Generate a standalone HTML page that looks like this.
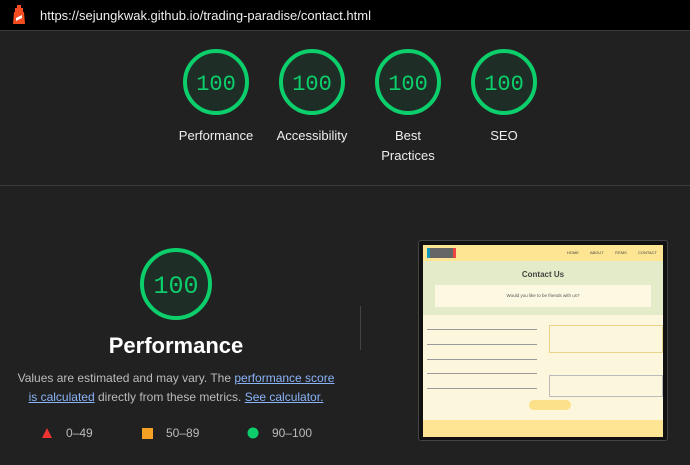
<!DOCTYPE html><html><head><style>
body{margin:0;width:690px;height:465px;background:#212121;font-family:"Liberation Sans",sans-serif;color:#fff;position:relative;overflow:hidden}
.top{position:absolute;left:0;top:0;width:690px;height:30px;background:#000;border-bottom:1px solid #3a3a3a}
.url{position:absolute;left:40px;top:8px;font-size:13px;color:#eee}
.lbl{position:absolute;width:110px;text-align:center;font-size:13px;line-height:20px;color:#eee}
.a{color:#8ab4f8;text-decoration:underline}
</style></head><body>
<div class="top"><svg style="position:absolute;left:12px;top:5px" width="14" height="20" viewBox="0 0 14 20"><rect x="5" y="0" width="4" height="3" fill="#f44b21"/><rect x="3" y="3" width="8" height="4" fill="#f44b21"/><path d="M2 7h10l1 12H1z" fill="#f44b21"/><path d="M4 13l6-3v3l-6 3z" fill="#fff"/></svg><div class="url">https://sejungkwak.github.io/trading-paradise/contact.html</div></div>
<svg style="position:absolute;left:0;top:0" width="690" height="465">
<g fill="#1e2d25" stroke="#0cce6b" stroke-width="4">
<circle cx="216" cy="82" r="31"/><circle cx="312" cy="82" r="31"/><circle cx="408" cy="82" r="31"/><circle cx="504" cy="82" r="31"/>
<circle cx="176" cy="284" r="34"/></g>
<g fill="#0cce6b" font-family="Liberation Mono,monospace" text-anchor="middle" font-size="22">
<text x="216" y="90">100</text><text x="312" y="90">100</text><text x="408" y="90">100</text><text x="504" y="90">100</text>
<text x="176" y="293" font-size="25">100</text></g>
<line x1="0" y1="185.5" x2="690" y2="185.5" stroke="#3a3a3a"/>
<line x1="360.5" y1="306" x2="360.5" y2="350" stroke="#444"/>
<polygon points="47,428 52,438 42,438" fill="#e33"/>
<rect x="142" y="428" width="11" height="11" fill="#f4a124"/>
<circle cx="253" cy="433" r="5.5" fill="#0cce6b"/>
</svg>
<div class="lbl" style="left:161px;top:126px">Performance</div>
<div class="lbl" style="left:257px;top:126px">Accessibility</div>
<div class="lbl" style="left:353px;top:126px">Best<br>Practices</div>
<div class="lbl" style="left:449px;top:126px">SEO</div>
<div style="position:absolute;left:0;width:352px;top:333px;text-align:center;font-size:22px;font-weight:bold">Performance</div>
<div style="position:absolute;left:0;width:352px;top:369px;text-align:center;font-size:12px;line-height:19px;color:#bbb">Values are estimated and may vary. The <span class="a">performance score<br>is calculated</span> directly from these metrics. <span class="a">See calculator.</span></div>
<div style="position:absolute;top:426px;left:66px;font-size:12px;color:#bbb">0–49</div>
<div style="position:absolute;top:426px;left:166px;font-size:12px;color:#bbb">50–89</div>
<div style="position:absolute;top:426px;left:272px;font-size:12px;color:#bbb">90–100</div>
<div style="position:absolute;left:418px;top:240px;width:248px;height:199px;background:#111;border:1px solid #444;border-radius:3px">
<div style="position:absolute;left:4px;top:4px;width:240px;height:192px;background:#fcf6dd;overflow:hidden">
<div style="height:16px;background:#fde593;position:relative"><div style="position:absolute;left:4px;top:3px;width:23px;height:10px;background:#666;border-left:3px solid #19b;border-right:3px solid #e44"></div>
<div style="position:absolute;right:6px;top:5px;font-size:4px;color:#444;word-spacing:10px">HOME ABOUT ITEMS CONTACT</div></div>
<div style="height:54px;background:#e4ebc8;position:relative;text-align:center"><div style="font-size:8px;font-weight:bold;color:#444;padding-top:9px">Contact Us</div>
<div style="position:absolute;left:12px;right:12px;top:24px;height:22px;background:#fdf8e2;font-size:4.5px;color:#555;line-height:22px">Would you like to be friends with us?</div></div>
<div style="position:absolute;left:106px;top:155px;width:42px;height:10px;background:#fde08a;border-radius:6px"></div>
<div style="position:absolute;left:126px;top:80px;width:114px;height:28px;border:1px solid #e8d38a;box-sizing:border-box"></div>
<div style="position:absolute;left:126px;top:130px;width:114px;height:22px;border:1px solid #bbb;box-sizing:border-box"></div>
<div style="position:absolute;left:4px;top:84px;width:110px;height:1px;background:#999;box-shadow:0 15px #999,0 30px #999,0 44px #999,0 59px #999"></div>
<div style="position:absolute;left:0;bottom:0;width:240px;height:17px;background:#fde593"></div>
</div></div>
</body></html>
